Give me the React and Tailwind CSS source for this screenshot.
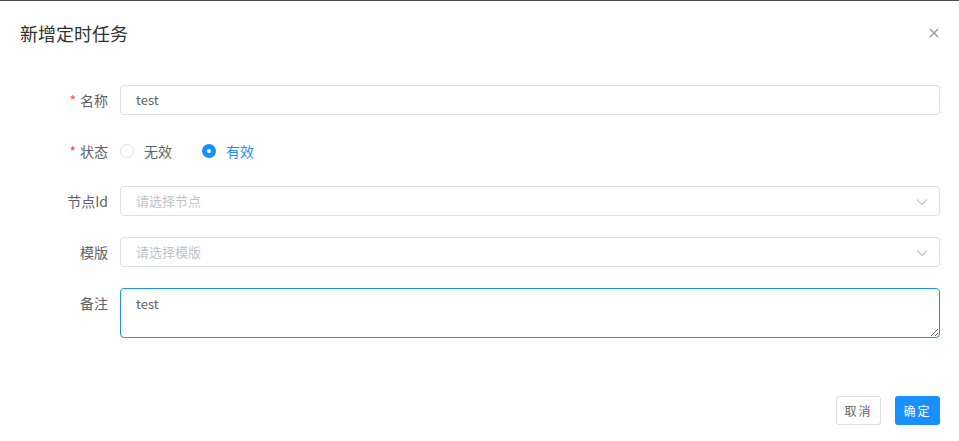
import React from "react";

const font = { fontFamily: '"Noto Sans CJK SC", "Noto Sans", sans-serif' };

function Label({ children, required }) {
  return (
    <div className="w-[100px] shrink-0 pr-3 text-right text-[14px] text-[#606266] leading-[30px]">
      {required && <span className="text-[#ff4949] mr-1">*</span>}
      {children}
    </div>
  );
}

function Chevron() {
  return (
    <svg width="12" height="8" viewBox="0 0 12 8" className="absolute right-[11px] top-[11px]">
      <path d="M1 1.5 L6 6.5 L11 1.5" fill="none" stroke="#c0c4cc" strokeWidth="1.2" />
    </svg>
  );
}

export default function App() {
  return (
    <div style={font} className="w-[959px] h-[441px] bg-white border-t border-[#4a4a4a] flex flex-col">
      <div className="flex items-center justify-between pl-5 pr-5 pt-5 pb-[10px]">
        <span className="text-[18px] leading-6 text-[#303133]">新增定时任务</span>
        <svg width="10" height="10" viewBox="0 0 10 10">
          <path d="M1 1 L9 9 M9 1 L1 9" stroke="#909399" strokeWidth="1.2" />
        </svg>
      </div>
      <div className="pl-5 pr-[19px] pt-[30px] flex flex-col">
        <div className="flex">
          <Label required>名称</Label>
          <div className="flex-1 h-[30px] border border-[#dcdfe6] rounded-[4px] px-[15px] text-[13px] leading-[28px] text-[#606266]">test</div>
        </div>
        <div className="flex mt-[21px] h-[29px]">
          <Label required>状态</Label>
          <div className="flex items-center h-[30px] text-[14px]">
            <span className="w-[14px] h-[14px] rounded-full border border-[#dcdfe6] bg-white"></span>
            <span className="ml-[10px] text-[#606266]">无效</span>
            <span className="ml-[30px] w-[14px] h-[14px] rounded-full bg-[#1890ff] flex items-center justify-center">
              <span className="w-[4px] h-[4px] rounded-full bg-white"></span>
            </span>
            <span className="ml-[10px] text-[#1890ff]">有效</span>
          </div>
        </div>
        <div className="flex mt-[21px]">
          <Label>节点Id</Label>
          <div className="relative flex-1 h-[30px] border border-[#dcdfe6] rounded-[4px] px-[15px] text-[13px] leading-[28px] text-[#c0c4cc]">
            请选择节点
            <Chevron />
          </div>
        </div>
        <div className="flex mt-[21px]">
          <Label>模版</Label>
          <div className="relative flex-1 h-[30px] border border-[#dcdfe6] rounded-[4px] px-[15px] text-[13px] leading-[28px] text-[#c0c4cc]">
            请选择模版
            <Chevron />
          </div>
        </div>
        <div className="flex mt-[21px]">
          <Label>备注</Label>
          <textarea
            readOnly
            defaultValue="test"
            style={font}
            className="flex-1 h-[50px] border border-[#1890ff] rounded-[4px] px-[15px] py-[5px] text-[13px] leading-[20px] text-[#606266] outline-none resize-y"
          />
        </div>
      </div>
      <div className="mt-auto flex justify-end gap-[14px] pr-[19px] pb-[16px]">
        <button className="w-[45px] h-[29px] border border-[#dcdfe6] rounded-[3px] bg-white text-[12px] text-[#606266] tracking-[2px]">取消</button>
        <button className="w-[45px] h-[29px] rounded-[3px] bg-[#1890ff] text-[12px] text-white tracking-[2px]">确定</button>
      </div>
    </div>
  );
}
